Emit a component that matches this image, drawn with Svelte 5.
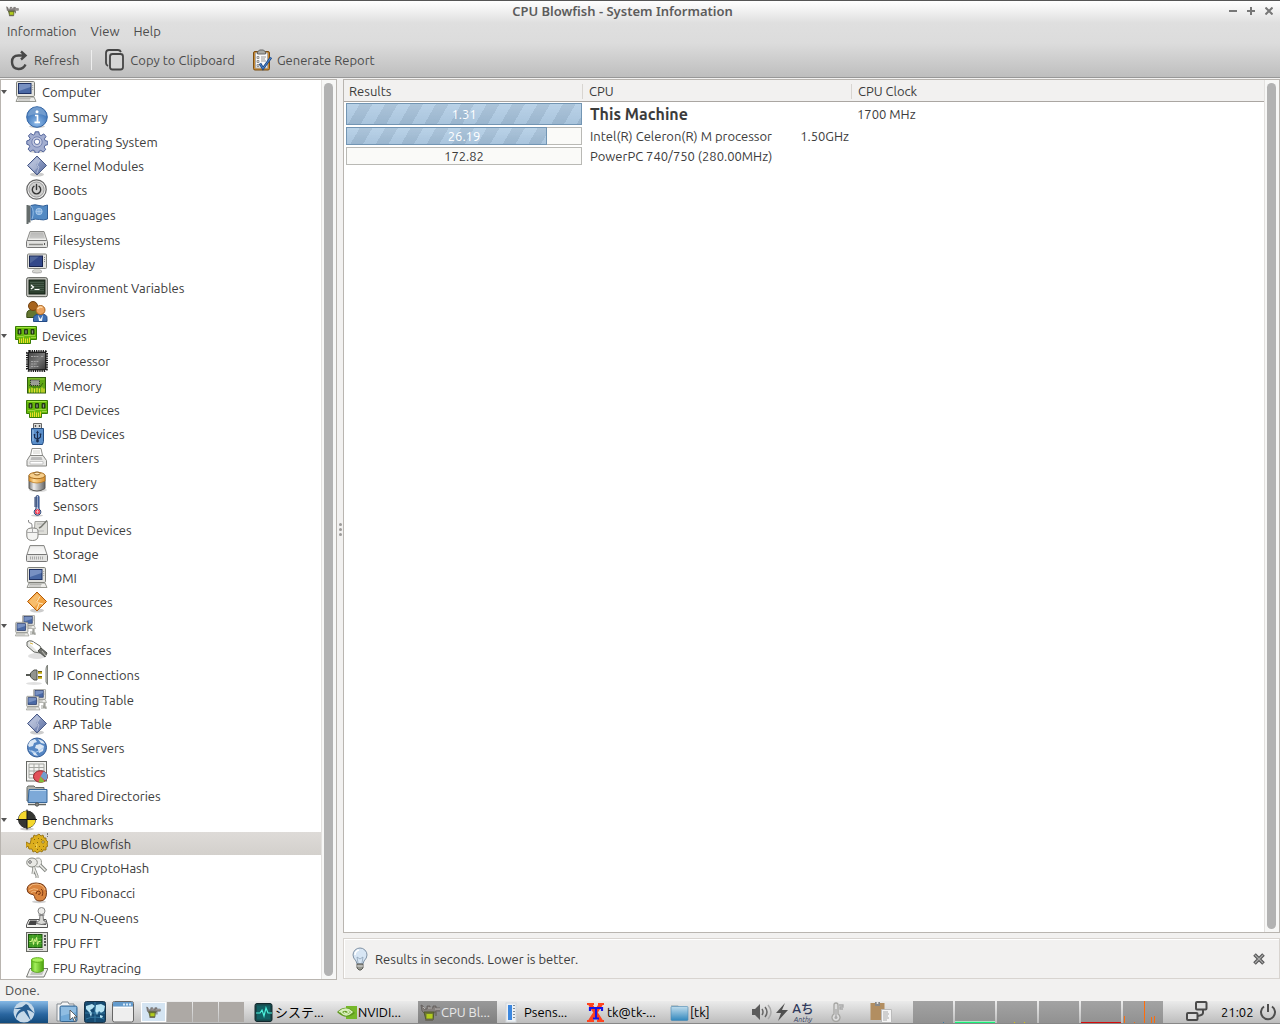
<script lang="ts">
	type Item = { label: string; icon: string; size?: string };
	type Group = { label: string; icon: string; items: Item[] };

	const monitor = (x: number, y: number, s: number) => `
		<g transform="translate(${x} ${y}) scale(${s})">
			<path d="M2.500 16h16l2 4.500H.5z" fill="#ecece9" stroke="#8b8c86" stroke-width=".9"/>
			<path d="M3 17.500h12M2.500 19h12" stroke="#a9aaa5" stroke-width=".8"/>
			<rect x="1" y=".5" width="18" height="15" rx="1.200" fill="#e3e3df" stroke="#7f807a"/>
			<rect x="3" y="2.500" width="12.500" height="10" fill="#4a69a5" stroke="#1f3265"/>
			<path d="M3.500 3h11.500v3L3.500 10z" fill="#8ba3cf" opacity=".7"/>
			<path d="M17.200 4v6" stroke="#a5a6a0" stroke-dasharray="1 1"/>
		</g>`;

	const diamond = `
		<ellipse cx="11" cy="19.500" rx="7" ry="2" fill="#000" opacity=".2"/>
		<path d="M11 1l9.500 9.500L11 20l-9.500-9.500z" fill="url(#blueSteel)" stroke="#4a5a86"/>
		<path d="M11 2.500l3 3-4 4 2 3-4 3.500-5-5.500z" fill="#fff" opacity=".28"/>
		<path d="M14 5l-3 5 2 2-2 6" fill="none" stroke="#d5dced" stroke-width=".7" opacity=".8"/>`;

	const card = `
		<path d="M.5 1.500h21v13h-6v4h-12v-4h-3z" fill="#65b80b" stroke="#397d05"/>
		<path d="M1.500 2.500h19" stroke="#a2e53c"/>
		<path d="M3 4.500h3v4.500H3zM9.500 4.500h3v4.500h-3zM16 4.500h3v4.500h-3z" fill="#3d5030" stroke="#16260b" stroke-width=".8"/>
		<path d="M4.500 5.500v3M11 5.500v3M17.500 5.500v3" stroke="#8d9a82"/>
		<path d="M4.500 13.500v4.500M6.500 13.500v4.500M8.500 12.500v5.500M10.500 13.500v4.500M12.500 13.500v4.500M14.500 12.500v5" stroke="#f0dc28"/>
		<path d="M2 11.500h6l2-1h10M16 12.500h5" fill="none" stroke="#b4e05a" stroke-width=".7"/>`;

	const robot = `
		<path d="M1 3l2 1 1 3h3V4h3v2h3V4h3v2h5v3h-5l-2 2H4L2 9z" fill="#85807e" stroke="#5f5b59" stroke-width=".8"/>
		<path d="M3 5l2 2M8 6h4M15 7h6" stroke="#b9b5b2"/>
		<path d="M4 10h10l-1 8H6z" fill="#6f7a35" stroke="#51582d"/>
		<path d="M6.500 12h6v4.500h-6z" fill="#b2cc1e"/>
		<path d="M14 10h2v4M5 18h8" fill="none" stroke="#6b675f" stroke-width="1.500"/>`;

	const disk = `
		<path d="M4 2.500h14l3 9H1z" fill="url(#silver)" stroke="#8b8b88"/>
		<rect x=".5" y="11.500" width="21" height="7" rx="1" fill="#e2e2e0" stroke="#777"/>`;

	const icons: Record<string, string> = {
		computer: monitor(0.5, 0, 1),
		info: `
			<ellipse cx="11" cy="20.500" rx="8" ry="1.500" fill="#000" opacity=".2"/>
			<circle cx="11" cy="11" r="10.300" fill="url(#blueBall)" stroke="#3566a5"/>
			<path d="M2 10a9 9 0 0 1 18 0q-8-4-18 0z" fill="#fff" opacity=".22"/>
			<circle cx="11" cy="5.700" r="1.500" fill="#fff"/>
			<path d="M9 9.500h2.500v7M8.500 16.300h5.500" stroke="#fff" stroke-width="1.700" fill="none"/>`,
		gear: `
			<ellipse cx="11" cy="20.500" rx="8" ry="1.300" fill="#000" opacity=".18"/>
			<path d="M9.200.8h3.600l.6 3 1.700.8 2.700-1.700 2.200 2.600-1.600 2.400.8 1.700 2.600.7v3.300l-2.800.8-.8 1.700 1.500 2.500-2.500 2.300-2.400-1.600-1.600.7-.7 2.200H9.300l-.7-2.400-1.700-.8-2.600 1.500-2.200-2.400 1.600-2.400-.8-1.800-2.100-.7v-3.300l2.500-.8.8-1.700-1.700-2.500 2.300-2.500 2.500 1.600 1.400-.7z" fill="#a3aed0" stroke="#51639a"/>
			<circle cx="11" cy="11" r="5.200" fill="#c4cae0" stroke="#7483b4"/>
			<circle cx="11" cy="10.800" r="2.700" fill="#fff" stroke="#6273a7"/>`,
		diamond,
		power: `
			<circle cx="10.500" cy="10.500" r="9.700" fill="#efefee" stroke="#666" stroke-width="1.200"/>
			<circle cx="10.500" cy="10.500" r="7.600" fill="#cfcfce" stroke="#999"/>
			<path d="M8 7.300a4.200 4.200 0 1 0 5 0M10.500 5.500v5" fill="none" stroke="#333" stroke-width="1.400" stroke-linecap="round"/>`,
		flag: `
			<path d="M1.500 1v19M3.500 1.500v17" stroke="#656c6b" stroke-width="2"/>
			<path d="M5 1.500q4-1.500 8 0t8.500-.5v14q-4 1.500-8 .5t-8.500.5z" fill="#5289c3" stroke="#315f98"/>
			<path d="M5 2q4 5 1 13" stroke="#90b8e2" fill="none"/>
			<circle cx="13" cy="7.500" r="3.200" fill="#7baadd" stroke="#b4d0ed" stroke-width=".8"/>
			<path d="M10 7.500h6M13 4.500v6" stroke="#b4d0ed" stroke-width=".6"/>`,
		drive: `${disk}<path d="M5 3.500h12l2 6H3z" fill="#888" opacity=".35"/><path d="M3 15.500h14" stroke="#8b8b88" stroke-width="1.500"/><path d="M18.500 14v2" stroke="#555"/>`,
		display: `
			<ellipse cx="11" cy="18.500" rx="5" ry="1.500" fill="#d9d9d5" stroke="#aaa"/>
			<path d="M8 15.500h6v3H8z" fill="#d4d5d0"/>
			<rect x="1.500" y="1" width="19" height="14.500" rx="1" fill="#e3e3df" stroke="#858681"/>
			<rect x="3.500" y="3" width="13" height="10.500" fill="#34498a" stroke="#17234f"/>
			<path d="M4 3.500h9L4 10.500z" fill="#6278a5" opacity=".6"/><path d="M18.500 4v6" stroke="#888" stroke-dasharray="1 1"/>`,
		terminal: `
			<rect x=".7" y=".7" width="20.600" height="19" rx="1.500" fill="#d0d1cb" stroke="#535650"/>
			<rect x="3" y="3" width="16" height="14" fill="#2d402f" stroke="#111c12"/>
			<path d="M4 5.500h14M4 7.500h14M4 9.500h14M4 11.500h14M4 13.500h14" stroke="#56695a" stroke-width=".6"/>
			<path d="M5 8l2.500 2L5 12M8.500 12.500h5" fill="none" stroke="#fff" stroke-width="1.200"/>`,
		users: `
			<path d="M.8 16.500V13q0-4.500 6-4.500 5 0 6 4.500v3.500z" fill="#637631" stroke="#394b14"/>
			<circle cx="7" cy="5" r="4.500" fill="#a8651e" stroke="#704110"/>
			<path d="M7.500 20.500v-3q0-4.500 7-4.500t6.500 4.500v3z" fill="#3d6eb2" stroke="#234a85"/>
			<path d="M12 14l2.500 4 2.500-4-1 6h-3z" fill="#f2f5fa"/>
			<circle cx="14.500" cy="9" r="4.500" fill="#eaa25d" stroke="#ad651b"/>
			<path d="M11.500 8q2-3 5-1.500" stroke="#ffd8a6" fill="none" stroke-width="1.500"/>`,
		card,
		cpu: `
			<rect x="1.500" y="1.500" width="19" height="19" rx="2" fill="#555" stroke="#171717" stroke-width="3" stroke-dasharray="1.200 1"/>
			<rect x="2.500" y="2.500" width="17" height="17" fill="url(#darkChip)" stroke="#222"/>
			<path d="M5 6.500h8M15 6.500h3M5 11.500h8M5 14h6M5 16.500h8" stroke="#a4a4a4" stroke-width="1.100" stroke-dasharray="2 .7"/>`,
		memory: `
			<rect x="1.500" y="2.500" width="18" height="15.500" fill="#60a914" stroke="#315d0c"/>
			<path d="M2.500 4h16" stroke="#97cf45"/>
			<rect x="4.500" y="5" width="9" height="5.500" fill="#9b9d96" stroke="#333" stroke-dasharray="1 1"/>
			<path d="M3.500 13.500v4M6 12.500v5M8.500 13.500v4M11 12.500v5M13.500 13.500v4M16 12.500v5M18 13.500v4" stroke="#eee334" stroke-width="1.200"/>
			<path d="M3 10l3 2h8l3-4" fill="none" stroke="#29540a" stroke-width=".8"/>`,
		usb: `
			<path d="M7.500.5h8v6h-8z" fill="#dededb" stroke="#666"/>
			<path d="M9.500 2v2M13.500 2v2" stroke="#555" stroke-width="1.300"/>
			<path d="M5.500 5.500h12v13l-1 3h-10l-1-3z" fill="#5b8fca" stroke="#244d82"/>
			<path d="M7 7v11" stroke="#a5c6e8"/>
			<path d="M11.500 18.500v-9M8.500 12v2.500l3 2 3-2.500v-2.500" fill="none" stroke="#1c2e50" stroke-width="1.100"/>
			<path d="M10 10l1.500-2.500L13 10zM7.700 11h1.600v1.600H7.700zM13.700 10.500h1.600v1.600h-1.600z" fill="#1c2e50"/>
			<circle cx="11.500" cy="18" r="1.400" fill="#1c2e50"/>`,
		printer: `
			<path d="M6 1.500h9l2 9H4z" fill="#fff" stroke="#93938f"/>
			<path d="M7 4h7M7 6h7" stroke="#d0d0cc"/>
			<path d="M4 8.500h13l3.500 5v5.500H1v-5.500z" fill="#e9e9e7" stroke="#868683"/>
			<path d="M5.500 10h10l1 3h-12z" fill="#bbb"/>
			<path d="M4 14.500h13v2.500H4z" fill="#fff" stroke="#aaa" stroke-width=".6"/>`,
		battery: `
			<ellipse cx="12" cy="19" rx="9" ry="2" fill="#000" opacity=".15"/>
			<path d="M3 4.500v13q8 5 16 0v-13z" fill="url(#metal)" stroke="#5b5b58"/>
			<path d="M3 4.500v5.500q8 4 16 0V4.500z" fill="url(#gold)" stroke="#b87416" stroke-width=".7"/>
			<ellipse cx="11" cy="4.500" rx="8" ry="3.200" fill="#f7cf8b" stroke="#a96c1b"/>
			<ellipse cx="11" cy="2.500" rx="3" ry="1.500" fill="#ffe8bc" stroke="#8d5d1b"/>`,
		sensor: `
			<ellipse cx="11" cy="20.500" rx="6" ry="1.200" fill="#000" opacity=".2"/>
			<path d="M10 2q0-1.500 1.500-1.500T13 2v12a3.300 3.300 0 1 1-3 0z" fill="#b9c9e2" stroke="#263e71"/>
			<path d="M8 3h3.500M8 5h3.500M8 7h3.500M8 9h3.500M8 11h3.500" stroke="#1f3769"/>
			<path d="M12.500 1v12" stroke="#415f9c"/><circle cx="11.500" cy="16.800" r="2.500" fill="#ef3047"/><path d="M11.500 15v3.500M9.800 16.800h3.400" stroke="#ffb0b8"/>`,
		input: `
			<path d="M9 2.500h12.500v13H8z" fill="#deded9" stroke="#a2a29e"/>
			<path d="M11 5h6M11 12h7" stroke="#bbb"/>
			<path d="M13 9l2-1 6-6.500" fill="none" stroke="#777973" stroke-width="1.500"/>
			<path d="M6 10V6q0-2-2-2T2.500 1" fill="none" stroke="#888"/>
			<path d="M.8 12q0-3 5.700-3t5.500 3v5q0 4.500-5.500 4.500T.8 17z" fill="#f4f4f2" stroke="#858581"/>
			<path d="M1 13.500h11M6.500 9v4.500" stroke="#aaa"/>`,
		storage: `${disk}<path d="M4.500 3.500h13l2.500 7.500H2z" fill="#fff" opacity=".6"/><path d="M4 15h13" stroke="#aaa" stroke-width="3" stroke-dasharray="1 1"/>`,
		resource: `
			<ellipse cx="11" cy="19.500" rx="7" ry="2" fill="#000" opacity=".2"/>
			<path d="M11 1l9.500 9.500L11 20l-9.500-9.500z" fill="#f2a443" stroke="#b45c08"/>
			<path d="M11 2.500l3 3-4 4 2 3-4 4-5-6z" fill="#ffe4aa" opacity=".4"/>
			<path d="M14 5.500l-3 5 2 2-2 6M13 12l4 1" fill="none" stroke="#fff0cd" stroke-width=".9"/>`,
		network: `${monitor(7, 0, 0.66)}${monitor(0, 7, 0.68)}<path d="M18 14v3h-3M19 14v5h-4M17 18h3v2" fill="none" stroke="#a0a19b" stroke-width="1.200"/>`,
		plug: `
			<ellipse cx="11" cy="17" rx="9" ry="3" fill="#000" opacity=".12"/>
			<path d="M1 3q2-2 5-1l8 5 2 4-2 3-6-1-7-6z" fill="#e4e5e1" stroke="#656762"/>
			<path d="M3 4l4-1 7 5-3 4z" fill="#fff"/>
			<path d="M12 12l3-3 6 5-2 4z" fill="#70726d" stroke="#4d4f4b"/><path d="M16 12l4 5" stroke="#c1c1bb"/><path d="M4 4l3 1" stroke="#d3b344"/>`,
		connection: `
			<ellipse cx="8" cy="19.500" rx="8" ry="1.500" fill="#000" opacity=".12"/>
			<path d="M-1 11h7" stroke="#555853" stroke-width="2"/>
			<path d="M4.500 9l3.500-3h3v10H8l-3.500-3z" fill="#92948e" stroke="#50534d"/>
			<path d="M12 8.500h4M12 13.500h4" stroke="#c3a90e" stroke-width="2.500"/><path d="M12 7.500h4M12 12.500h4" stroke="#6a5b12"/>
			<path d="M21.500 1q-1.500 2-1.500 4v13l1.500 2.500z" fill="#d4d5d1" stroke="#7e817b"/>`,
		globe: `
			<circle cx="11" cy="10.500" r="9.500" fill="#5687c4" stroke="#315b97"/>
			<path d="M4 4l5-2 2 3-3 1-1 3-4 1-1-2zM10 8l4-1 4 2-1 5-4 2-1-4-3-1zM12 2l5 2 2 3-4-1zM5 13l4 2 3 4-4-1z" fill="#eef5fc" opacity=".88"/>
			<path d="M3 13q6 6 15-3" fill="none" stroke="#a9caef"/>`,
		stats: `
			<rect x=".5" y=".5" width="20" height="19.500" fill="#f2f2f0" stroke="#666864"/>
			<path d="M3 3h15v14H3zM3 6.500h15M3 10h15M3 13.500h15M8 3v14M13 3v14" fill="none" stroke="#a5a7a2"/>
			<ellipse cx="14.500" cy="15.500" rx="7" ry="5.800" fill="#e25059" stroke="#8c2027"/>
			<path d="M14.500 15.500l3-5q4 1 4 5 0 2-2 4z" fill="#729fcf"/><path d="M14.500 15.500l4 5q-3 1.500-6 .5z" fill="#83bd39"/>`,
		folder: `
			<path d="M1 2.500L2 1h6l1.500 1.500H18V16H1z" fill="#b0b2ad" stroke="#666964"/>
			<path d="M3 4.500h18v13H2z" fill="#7da9d8" stroke="#386798"/>
			<path d="M4 5.500h16" stroke="#bcd7f0"/><path d="M2 19.500h18M11 18v3" stroke="#62645f" stroke-width="1.300"/><circle cx="11" cy="19.500" r="1.700" fill="#888a84" stroke="#555"/>`,
		benchmark: `
			<ellipse cx="12" cy="20" rx="7" ry="1.500" fill="#000" opacity=".2"/>
			<circle cx="12" cy="10.500" r="8.500" fill="#353632" stroke="#333"/>
			<path d="M12 10.500H3.500A8.500 8.500 0 0 1 12 2zM12 10.500h8.500a8.500 8.500 0 0 1-8.500 8.500z" fill="#f4d72d"/>
			<path d="M1.500 10.500h21M12 .5v20" stroke="#111"/>`,
		fish: `
			<path d="M0 9l4 2 1-4 0-2 2 0 1-3 2 1 3-2 2 2 2-1 1 3 2 0 0 2 2 2-1 2 1 2-2 1 0 3-3 0-1 2-2-1-3 2-2-2-2 1-1-3-3 0-1-3-4 3 2-4z" fill="#dcae1d" stroke="#94700f" stroke-width=".9"/>
			<path d="M8 6l1 1M12 5l1 1M7 10l1 1M11 9l1 1M9 13l1 1M13 13l1 1M11 16l1 1M15 16l1 1M17 13l1 1M15 6l1 1" stroke="#8a690d"/>
			<circle cx="17" cy="9" r="1.200" fill="#fff5b0" stroke="#66500f" stroke-width=".7"/><path d="M10 11q2 2 0 4" stroke="#f6da60" fill="none"/><path d="M21.500 0v2M21.500 3v1" stroke="#777"/>`,
		keys: `
			<path d="M7 9l4 10v2M8 10l-1 7" stroke="#858883" stroke-width="3"/>
			<path d="M7 9l4 10v2M8 10l-1 7" stroke="#e6e6e2" stroke-width="1.500"/>
			<ellipse cx="12" cy="5.500" rx="3.500" ry="4.500" fill="#ededea" stroke="#999b96"/>
			<ellipse cx="6" cy="5.500" rx="5.300" ry="4.500" fill="#e8e8e4" stroke="#888a84"/>
			<path d="M14 8l6 6" fill="none" stroke="#858883" stroke-width="3.500"/><path d="M14 8l5.500 5.500" stroke="#ededea" stroke-width="1.500"/><circle cx="4" cy="5" r="1.300" fill="#fff" stroke="#666"/>`,
		shell: `
			<ellipse cx="13" cy="19.800" rx="7" ry="1.500" fill="#000" opacity=".18"/>
			<path d="M1 7Q2 1 10 1q10.500 0 10.500 9.500Q20.500 19 14 19q-5 0-5.500-4.500Q8 12 4.500 12 1 11 1 7z" fill="#d9843e" stroke="#733612"/>
			<path d="M16 14q2-5-1-7M10 12q0-3 3-3 2 1 1 3-1 1-2 0" fill="none" stroke="#7d3710"/>
			<path d="M3 5.500q3-4 8-3.500 6 .5 8 6" fill="none" stroke="#f2ba80"/>
			<path d="M3 8.500q5-3 9-1M5 10.500q3-2 5-1" fill="none" stroke="#f2ba80"/>`,
		pawn: `
			<path d="M3 12.500h17l1.500 5.500v2.500h-21V18z" fill="#f3f3f1" stroke="#555"/>
			<path d="M4 13.500h7l-1 4.500H2zM15 13.500h4l1 4.500h-5z" fill="#444"/>
			<path d="M14 8h3l.5 5.500q3 1 3 3-5 2-10 0 0-2 3-3z" fill="#d9d9d6" stroke="#777"/>
			<circle cx="15.500" cy="4" r="3.500" fill="#ececea" stroke="#888"/><path d="M12.500 8h6" stroke="#777"/>`,
		scope: `
			<rect x=".5" y=".5" width="21" height="19" fill="#deded9" stroke="#666862"/>
			<rect x="2.500" y="2.500" width="13.500" height="13" fill="#3f9c20" stroke="#1e5211"/>
			<path d="M3 6.500h13M3 11.500h13M7 2.500v13M11.500 2.500v13" stroke="#69b64d" stroke-width=".5"/>
			<path d="M3.500 9.500h2l1-3 1 6 1-5 1 2 1-4 1 7 1-3h2" fill="none" stroke="#d9f88a"/><path d="M19 3v12" stroke="#555" stroke-width="2" stroke-dasharray="2 1"/><path d="M3 17.500h14" stroke="#888"/>`,
		cylinder: `
			<path d="M4 11.500h18l-4 8.500H.5z" fill="#f1f1ef" stroke="#777974"/>
			<path d="M6 14h12l-2 4H4z" fill="#c3c5c0"/>
			<path d="M5.500 3v10.500q6 4 12 0V3z" fill="url(#green)" stroke="#4a990c" stroke-width=".7"/>
			<ellipse cx="11.500" cy="3" rx="6" ry="2.300" fill="#aaf05c" stroke="#5aad16"/>`
	};

	const groups: Group[] = [
		{
			label: 'Computer',
			icon: 'computer',
			items: [
				{ label: 'Summary', icon: 'info', size: 'tall' },
				{ label: 'Operating System', icon: 'gear', size: 'tall' },
				{ label: 'Kernel Modules', icon: 'diamond' },
				{ label: 'Boots', icon: 'power' },
				{ label: 'Languages', icon: 'flag', size: 'tall' },
				{ label: 'Filesystems', icon: 'drive', size: 'tall' },
				{ label: 'Display', icon: 'display' },
				{ label: 'Environment Variables', icon: 'terminal' },
				{ label: 'Users', icon: 'users' }
			]
		},
		{
			label: 'Devices',
			icon: 'card',
			items: [
				{ label: 'Processor', icon: 'cpu', size: 'tall' },
				{ label: 'Memory', icon: 'memory', size: 'tall' },
				{ label: 'PCI Devices', icon: 'card' },
				{ label: 'USB Devices', icon: 'usb' },
				{ label: 'Printers', icon: 'printer' },
				{ label: 'Battery', icon: 'battery' },
				{ label: 'Sensors', icon: 'sensor' },
				{ label: 'Input Devices', icon: 'input' },
				{ label: 'Storage', icon: 'storage' },
				{ label: 'DMI', icon: 'computer' },
				{ label: 'Resources', icon: 'resource' }
			]
		},
		{
			label: 'Network',
			icon: 'network',
			items: [
				{ label: 'Interfaces', icon: 'plug' },
				{ label: 'IP Connections', icon: 'connection', size: 'tall' },
				{ label: 'Routing Table', icon: 'network', size: 'tall' },
				{ label: 'ARP Table', icon: 'diamond' },
				{ label: 'DNS Servers', icon: 'globe' },
				{ label: 'Statistics', icon: 'stats' },
				{ label: 'Shared Directories', icon: 'folder' }
			]
		},
		{
			label: 'Benchmarks',
			icon: 'benchmark',
			items: [
				{ label: 'CPU Blowfish', icon: 'fish', size: 'short' },
				{ label: 'CPU CryptoHash', icon: 'keys', size: 'tall' },
				{ label: 'CPU Fibonacci', icon: 'shell', size: 'tall' },
				{ label: 'CPU N-Queens', icon: 'pawn', size: 'tall' },
				{ label: 'FPU FFT', icon: 'scope', size: 'tall' },
				{ label: 'FPU Raytracing', icon: 'cylinder', size: 'tall' }
			]
		}
	];

	const results = [
		{ value: '1.31', percent: 100, cpu: 'This Machine', extra: '', clock: '1700 MHz' },
		{ value: '26.19', percent: 85, cpu: 'Intel(R) Celeron(R) M processor', extra: '1.50GHz', clock: '' },
		{ value: '172.82', percent: 0, cpu: 'PowerPC 740/750 (280.00MHz)', extra: '', clock: '' }
	];

	const taskIcons: Record<string, string> = {
		monitor: `<rect x="1" y="1.500" width="17" height="18" rx="2" fill="#17494c" stroke="#12282d"/><rect x="3" y="3.500" width="13" height="14" fill="#126063"/><path d="M2 11h4l2-3 2 6 2-8 2 5h4" fill="none" stroke="#4df1dc" stroke-width="1.200"/>`,
		nvidia: `<path d="M9 4h11v13H9z" fill="#76b82a"/><path d="M0 10q9-9 18 1-9 8-18-1z" fill="#5d981c"/><path d="M2 10q7-6 13 0-6 6-11 0 4-4 8 0-3 3-5 0" fill="none" stroke="#d9efbd" stroke-width="1.500"/>`,
		robot,
		psensor: `<rect x="3" y="1" width="10" height="19" fill="#edf1f5" stroke="#d1d6da"/><path d="M7 3v15" stroke="#3b87df" stroke-width="4"/><path d="M11 3v15" stroke="#7b8b98" stroke-width="2" stroke-dasharray="1 2"/>`,
		xterm: `<path d="M4 2l11 17M15 2L4 19" stroke="#ff431f" stroke-width="4"/><path d="M1 2h7M12 2h6M1 19h7M11 19h7" stroke="#ff431f" stroke-width="2"/><path d="M4 9V6h12v3M10 6v11M7 16.500h6" fill="none" stroke="#1413e8" stroke-width="2.200"/>`,
		files: `<path d="M2 3h7l1 2h8v4H2z" fill="#bbc3c5"/><rect x="2" y="4.500" width="17" height="14" rx="1" fill="url(#blueFolder)" stroke="#4787b1" stroke-width=".6"/>`
	};

	const tasks = [
		{ label: 'システ...', icon: 'monitor' },
		{ label: 'NVIDI...', icon: 'nvidia' },
		{ label: 'CPU Bl...', icon: 'robot' },
		{ label: 'Psens...', icon: 'psensor' },
		{ label: 'tk@tk-...', icon: 'xterm' },
		{ label: '[tk]', icon: 'files' }
	];

	const graphs = [
		'<path d="M30 21h1v1h-1z" fill="#397fae"/>',
		'<path d="M0 21h40v1H0z" fill="#16f078"/><path d="M0 20h40v1H0z" fill="#a4e8c0"/>',
		'<path d="M17 21h1v1h-1zM27 21h1v1h-1z" fill="#e4ca00"/>',
		'',
		'<path d="M0 21h40v1H0z" fill="#d40b0b"/>',
		'<path d="M1 15h1v7H1zM11 21h1v1h-1zM21 0h1v22h-1zM28 16h1v6h-1zM31 15h1v7h-1z" fill="#ff6d0a"/>'
	];

	let selected = 'CPU Blowfish';
	let workspace = 0;
	let showNote = true;
</script>

<svg class="defs" aria-hidden="true">
	<defs>
		<linearGradient id="blueSteel" x2="1" y2="1"><stop stop-color="#b3bfdd" /><stop offset="1" stop-color="#5a6d9f" /></linearGradient>
		<radialGradient id="blueBall" cy=".8"><stop stop-color="#8fbbea" /><stop offset="1" stop-color="#4b80c0" /></radialGradient>
		<linearGradient id="silver" x2="0" y2="1"><stop stop-color="#d0d0ce" /><stop offset="1" stop-color="#f4f4f2" /></linearGradient>
		<linearGradient id="darkChip" x2="1" y2="1"><stop stop-color="#454545" /><stop offset=".5" stop-color="#777" /><stop offset="1" stop-color="#3b3b3b" /></linearGradient>
		<linearGradient id="metal"><stop stop-color="#777" /><stop offset=".3" stop-color="#eee" /><stop offset="1" stop-color="#666" /></linearGradient>
		<linearGradient id="gold"><stop stop-color="#d88f2c" /><stop offset=".3" stop-color="#ffdc9a" /><stop offset="1" stop-color="#d88f2c" /></linearGradient>
		<linearGradient id="green"><stop stop-color="#5bb51a" /><stop offset=".3" stop-color="#a4ef5b" /><stop offset="1" stop-color="#4aa00c" /></linearGradient>
		<linearGradient id="blueFolder" x2="0" y2="1"><stop stop-color="#c0dded" /><stop offset="1" stop-color="#3187bd" /></linearGradient>
	</defs>
</svg>

<div class="desktop">
	<header>
		<div class="titlebar">
			<svg class="appicon" viewBox="0 0 22 22">{@html robot}</svg>
			<h1>CPU Blowfish - System Information</h1>
			<div class="controls">
				<button aria-label="Minimize"><svg viewBox="0 0 8 8"><path d="M0 4h8" /></svg></button>
				<button aria-label="Maximize"><svg viewBox="0 0 8 8"><path d="M0 4h8M4 0v8" /></svg></button>
				<button aria-label="Close"><svg viewBox="0 0 8 8"><path d="M.5.5l7 7M7.500.5l-7 7" /></svg></button>
			</div>
		</div>
		<nav class="menubar">
			<button>Information</button>
			<button>View</button>
			<button>Help</button>
		</nav>
		<div class="toolbar">
			<button>
				<svg viewBox="0 0 22 22"><path d="M17.500 15.500q-2 4.500-7 4.500-6.500-.5-6.500-7T10.500 6.500h7M13 2.500l4.500 4-4.500 4" fill="none" stroke="#484848" stroke-width="2.400" /></svg>
				Refresh
			</button>
			<span class="separator"></span>
			<button>
				<svg viewBox="0 0 22 22"><path d="M4 17q-2-1-2-3V4q0-3 3-3h9q2 0 3 2" fill="none" stroke="#454545" stroke-width="1.800" /><rect x="6" y="5" width="13" height="15.500" rx="2.500" fill="#d5d5d5" stroke="#454545" stroke-width="1.800" /></svg>
				Copy to Clipboard
			</button>
			<button>
				<svg viewBox="0 0 22 22">
					<rect x="2.500" y="2.500" width="16" height="18.500" rx="1.500" fill="#c88b36" stroke="#7b4e12" />
					<path d="M4.500 4h12v15h-12z" fill="#fafafa" stroke="#aaa" />
					<path d="M6.500 3l2-2h4l2 2v2h-8z" fill="#a9aaa5" stroke="#666" />
					<path d="M6 7.500h2v2H6zM6 11.500h2v2H6zM6 15.500h2v2H6z" fill="#ddd" stroke="#777" stroke-width=".7" />
					<path d="M10 8h5M10 10h4M10 12h5" stroke="#999" />
					<path d="M9 14.500l3 5 8-11" fill="none" stroke="#1e4a88" stroke-width="2.600" /><path d="M9 14.500l3 5 8-11" fill="none" stroke="#4f87cc" />
				</svg>
				Generate Report
			</button>
		</div>
	</header>

	<main>
		<aside class="frame">
			<nav class="tree">
				{#each groups as group}
					<button class="row group">
						<span class="expander"></span>
						<svg viewBox="0 0 22 22">{@html icons[group.icon]}</svg>
						{group.label}
					</button>
					{#each group.items as item}
						<button class="row {item.size ?? ''}" class:selected={selected === item.label} on:click={() => (selected = item.label)}>
							<svg viewBox="0 0 22 22">{@html icons[item.icon]}</svg>
							{item.label}
						</button>
					{/each}
				{/each}
			</nav>
			<div class="scrollbar"><div class="thumb"></div></div>
		</aside>

		<div class="splitter"><i></i><i></i><i></i></div>

		<section>
			<div class="frame report">
				<div class="tablebox">
					<table>
						<colgroup><col class="c1" /><col class="c2" /><col /></colgroup>
						<thead>
							<tr><th>Results</th><th>CPU</th><th>CPU Clock</th></tr>
						</thead>
						<tbody>
							{#each results as result, i}
								<tr class:mine={i === 0}>
									<td class="result">
										<div class="bar" class:filled={result.percent > 0}>
											<div class="fill" style="width: {result.percent}%"></div>
											<span>{result.value}</span>
										</div>
									</td>
									<td class="name"><div class="cpu"><span>{result.cpu}</span><span>{result.extra}</span></div></td>
									<td class="clock">{result.clock}</td>
								</tr>
							{/each}
						</tbody>
					</table>
				</div>
				<div class="scrollbar"><div class="thumb"></div></div>
			</div>

			{#if showNote}
				<div class="note">
					<svg viewBox="0 0 22 24">
						<path d="M11 1a7 7 0 0 1 7 7q0 3-3 6l-1 3H8l-1-3q-3-3-3-6a7 7 0 0 1 7-7z" fill="#d8e6f4" stroke="#7f91a4" />
						<path d="M6 8q0-4 4-5" fill="none" stroke="#fff" stroke-width="1.500" /><path d="M9 16l-1-6 3 2 3-2-1 6" fill="none" stroke="#8fa3b8" stroke-width=".8" />
						<path d="M8 17h6v4l-2 2h-2l-2-2z" fill="#96978f" stroke="#5c5d58" /><path d="M8 19h6" stroke="#ddd" />
					</svg>
					<p>Results in seconds. Lower is better.</p>
					<button aria-label="Close note" on:click={() => (showNote = false)}>
						<svg viewBox="0 0 14 14"><path d="M2.500 2.500l9 9M11.500 2.500l-9 9" stroke="#555" stroke-width="3.600" /><path d="M3 3l8 8M11 3l-8 8" stroke="#aaa" stroke-width="1.200" /></svg>
					</button>
				</div>
			{/if}
		</section>
	</main>

	<div class="status">Done.</div>

	<footer>
		<button class="start" aria-label="Applications">
			<svg viewBox="0 0 22 22"><circle cx="11" cy="11" r="10.500" fill="#c5d8e8" /><path d="M0 8l9-2 4-3q3 1 3 3l6 7q-5-4-8-4l4 11-7-10Q5 11 3 18q-1-6 5-10z" fill="#285d90" /></svg>
		</button>
		<div class="launchers">
			<button aria-label="File manager">
				<svg viewBox="0 0 22 22"><path d="M1 3h4l1-2h6l1 2h5v17H1z" fill="#f4f5f6" stroke="#858b90" /><rect x="4" y="5" width="17" height="15.500" rx="1.500" fill="#70a9d8" stroke="#36658f" /><path d="M5 6h15v5L5 15z" fill="#a5cbea" opacity=".6" /><path d="M14 9v10l2.500-2.500 2 4 1.500-1-2-3.500h3z" fill="#fff" stroke="#444" stroke-width=".8" /></svg>
			</button>
			<button aria-label="Web browser">
				<svg viewBox="0 0 22 22"><rect x=".5" y=".5" width="21" height="21" rx="2" fill="#164b72" stroke="#183348" /><path d="M2 5l6-2 3 2-3 3-2 1 2 3-1 4-2-5-3-3zM12 4l5-1 4 2-1 5-3 2-2-2-2 4-2-4zM16 14l3 1-1 2h-2z" fill="#b7e4f4" /><path d="M2 18q9-4 18 0M11 1v20M1 12h20" fill="none" stroke="#3f89b2" stroke-width=".7" /></svg>
			</button>
			<button aria-label="Show desktop">
				<svg viewBox="0 0 22 22"><rect x=".5" y=".5" width="21" height="20.500" rx="2" fill="#eee" stroke="#666" /><path d="M1 2q0-1 1-1h18q1 0 1 1v3.500H1z" fill="#649bcd" /><path d="M2 6.500h18" stroke="#fff" /><path d="M11 3.500h8" stroke="#d7e9f8" stroke-width="2" stroke-dasharray="2 1" /></svg>
			</button>
		</div>
		<div class="pager">
			{#each [0, 1, 2, 3] as n}
				<button class:current={workspace === n} aria-label="Workspace {n + 1}" on:click={() => (workspace = n)}>
					{#if workspace === n}<svg viewBox="0 0 22 22">{@html robot}</svg>{/if}
				</button>
			{/each}
		</div>
		<div class="tasks">
			{#each tasks as task, i}
				<button class:active={i === 2}>
					<svg viewBox="0 0 20 21">{@html taskIcons[task.icon]}</svg><span>{task.label}</span>
				</button>
			{/each}
		</div>
		<div class="tray">
			<svg class="volume" viewBox="0 0 22 20"><path d="M1 7h3l5-5v16l-5-5H1z" fill="#5c5c5c" /><path d="M11 7q2 3 0 6M14 5q4 5 0 10" fill="none" stroke="#666" stroke-width="1.500" /><path d="M17 3q6 7 0 14" fill="none" stroke="#aaa" stroke-width="1.500" /></svg>
			<svg class="bolt" viewBox="0 0 12 20"><path d="M9 1L0 11h5l-3 8 10-11H6z" fill="#505050" /></svg>
			<div class="anthy"><b>Aち</b><i>Anthy</i></div>
			<svg class="thermo" viewBox="0 0 14 20"><path d="M3 3q0-2 2-2t2 2v9a4 4 0 1 1-4 0z" fill="#ddd" stroke="#a5a5a2" stroke-width="1.300" /><circle cx="5" cy="15.500" r="1.500" fill="#aaa" /><path d="M5 7v8M8 3h4v2H9v2h3" fill="none" stroke="#aaa" stroke-width="1.300" /></svg>
			<svg class="clip" viewBox="0 0 22 22"><rect x=".5" y="2" width="14" height="17" fill="#b28e61" /><path d="M5 1h5v4H5z" fill="#888" /><circle cx="7.500" cy="2" r="1" fill="#eee" /><path d="M11.500 8.500h10v13h-10z" fill="#f4f4f4" stroke="#bbb" /><path d="M13 11h5M13 13h6M13 15h5M13 17h6M13 19h4" stroke="#aaa" /></svg>
		</div>
		<div class="graphs">
			{#each graphs as graph}
				<svg viewBox="0 0 40 22">{@html graph}</svg>
			{/each}
		</div>
		<svg class="net" viewBox="0 0 22 20"><g fill="#ddd" stroke="#4a4a4a" stroke-width="2"><rect x="10" y="1" width="10.500" height="7.500" rx="1" /><rect x="1" y="12" width="10.500" height="7" rx="1" /><path d="M17 8v4q0 2-5 3" fill="none" /></g></svg>
		<time>21:02</time>
		<button class="shutdown" aria-label="Shut down">
			<svg viewBox="0 0 18 18"><path d="M5 3.500a7 7 0 1 0 8 0M9 1v8" fill="none" stroke="#4e4e4e" stroke-width="2" /></svg>
		</button>
	</footer>
</div>

<style>
	:global(body) {
		margin: 0;
		background: #f2f1f0;
	}

	.defs {
		position: absolute;
		width: 0;
		height: 0;
	}

	.desktop {
		height: 100vh;
		display: flex;
		flex-direction: column;
		font: 13px/18px "Ubuntu", "Noto Sans", "Noto Sans CJK JP", sans-serif;
		color: #3c3c3c;
	}

	svg {
		display: block;
		flex: none;
	}

	button {
		display: flex;
		align-items: center;
		border: 0;
		padding: 0;
		margin: 0;
		background: none;
		font: inherit;
		color: inherit;
		white-space: nowrap;
	}

	header {
		box-sizing: border-box;
		height: 78px;
		margin-bottom: 1px;
		border-top: 1px solid #555;
		border-bottom: 1px solid #979797;
		background: linear-gradient(#fff, #dfdfdf 22px, #dcdcdc 42px, #bebebe);
		flex: none;
		color: #4c4c4c;
	}

	.titlebar {
		display: grid;
		grid-template-columns: 35px 1fr 70px;
		align-items: center;
		height: 20px;
	}

	.appicon {
		width: 13px;
		height: 13px;
		margin-left: 6px;
	}

	h1 {
		margin: 0;
		text-align: center;
		font-family: "Noto Sans", sans-serif;
		font-size: 13px;
		line-height: 16px;
		font-weight: 600;
		color: #5c5c5c;
	}

	.controls {
		display: flex;
		justify-content: flex-end;
		gap: 10px;
		padding-right: 7px;
	}

	.controls svg {
		width: 8px;
		height: 8px;
		fill: none;
		stroke: #777;
		stroke-width: 2;
	}

	.menubar {
		display: flex;
		gap: 14px;
		height: 20px;
		padding-left: 7px;
	}

	.toolbar {
		display: flex;
		align-items: center;
		height: 38px;
		padding-left: 8px;
	}

	.toolbar button {
		gap: 4px;
		margin-right: 16px;
	}

	.toolbar svg {
		width: 22px;
		height: 22px;
	}

	.separator {
		width: 1px;
		height: 20px;
		background: #eee;
		margin: 0 12px 0 -4px;
	}

	main {
		flex: 1;
		min-height: 0;
		display: flex;
	}

	.frame {
		box-sizing: border-box;
		display: flex;
		border: 1px solid #b9b5b0;
		background: #fff;
	}

	aside {
		width: 337px;
		flex: none;
	}

	.tree {
		flex: 1;
		overflow: hidden;
	}

	.row {
		width: 100%;
		height: 24px;
		gap: 5px;
		padding-left: 25px;
	}

	.row.tall {
		height: 25px;
	}

	.row.short {
		height: 23px;
	}

	.row.group {
		padding-left: 0;
	}

	.row svg {
		width: 22px;
		height: 22px;
	}

	.selected {
		background: linear-gradient(#dedbd8, #d3d0cc);
	}

	.expander {
		border: 3px solid transparent;
		border-top: 4px solid #555;
		border-bottom: 0;
		margin-right: 3px;
	}

	.scrollbar {
		box-sizing: border-box;
		width: 15px;
		flex: none;
		padding: 3px 3px 3px 2px;
		border-left: 1px solid #e3e1df;
		background: #f7f7f6;
	}

	.thumb {
		width: 9px;
		height: 100%;
		border-radius: 5px;
		background: #b2b2b2;
	}

	.splitter {
		display: flex;
		flex-direction: column;
		align-items: center;
		justify-content: center;
		gap: 2px;
		width: 6px;
		flex: none;
	}

	.splitter i {
		width: 3px;
		height: 3px;
		border-radius: 2px;
		background: #9c9a98;
	}

	section {
		flex: 1;
		min-width: 0;
		display: flex;
		flex-direction: column;
		gap: 5px;
	}

	.report {
		flex: 1;
		min-height: 0;
	}

	.tablebox {
		flex: 1;
		overflow: hidden;
	}

	table {
		width: 100%;
		border-collapse: collapse;
		table-layout: fixed;
	}

	.c1 {
		width: 239px;
	}

	.c2 {
		width: 269px;
	}

	th {
		box-sizing: border-box;
		height: 22px;
		padding: 0 6px;
		font-weight: normal;
		text-align: left;
		background: linear-gradient(#d8d5d1, #d8d5d1) right / 1px 15px no-repeat #f2f1f0;
		box-shadow: inset 0 -1px #aaa6a2;
	}

	th:first-child {
		padding-left: 5px;
	}

	th:last-child {
		background: #f2f1f0;
	}

	td {
		box-sizing: border-box;
		height: 20px;
		padding: 0 5px;
		line-height: 16px;
		white-space: nowrap;
	}

	.mine td {
		height: 24px;
	}

	td.result {
		padding: 1px 1px 1px 2px;
	}

	td.name {
		padding: 0 3px 0 7px;
	}

	.bar {
		box-sizing: border-box;
		display: grid;
		height: 18px;
		border: 1px solid #b9b9b5;
		background: #fafaf8;
		text-align: center;
		line-height: 16px;
	}

	.mine .bar {
		height: 22px;
		line-height: 20px;
	}

	.bar > * {
		grid-area: 1 / 1;
	}

	.filled {
		color: #fff;
	}

	.filled .fill {
		margin: -1px;
		border: 1px solid #7295b3;
		background: linear-gradient(#ffffff22, #00000008), repeating-linear-gradient(120deg, #afcbe4 0 11px, #9fbbd4 11px 22px);
	}

	.cpu {
		display: flex;
		justify-content: space-between;
	}

	.mine .cpu {
		font-size: 16px;
		font-weight: bold;
	}

	.note {
		box-sizing: border-box;
		display: flex;
		align-items: center;
		gap: 4px;
		height: 41px;
		margin-bottom: 1px;
		padding: 0 13px 0 5px;
		border: 1px solid #d8d4d0;
		box-shadow: inset 1px 1px #fff;
		flex: none;
	}

	.note > svg {
		width: 22px;
		height: 24px;
	}

	.note p {
		flex: 1;
		margin: 0;
	}

	.note button svg {
		width: 14px;
		height: 14px;
	}

	.status {
		height: 21px;
		line-height: 20px;
		padding-left: 5px;
		flex: none;
		color: #4c4c4c;
	}

	footer {
		box-sizing: border-box;
		display: flex;
		height: 23px;
		border-bottom: 1px solid #888;
		background: linear-gradient(#ebebeb, #bdbdbd);
		flex: none;
		color: #000;
	}

	.start {
		width: 48px;
		justify-content: center;
		background: linear-gradient(#85b8e5, #2a66a0 60%, #124a7c);
	}

	.start svg,
	.launchers svg {
		width: 22px;
		height: 22px;
	}

	.launchers {
		display: flex;
		gap: 6px;
		padding: 0 7px 0 8px;
	}

	.pager {
		display: flex;
		gap: 1px;
		padding-top: 1px;
	}

	.pager button {
		box-sizing: border-box;
		width: 25px;
		height: 20px;
		background: #ada9a5;
	}

	.pager .current {
		border: 1px solid #fff;
		background: #d4e4f2;
		justify-content: center;
	}

	.pager svg {
		width: 15px;
		height: 15px;
	}

	.tasks {
		flex: 1;
		display: flex;
		gap: 4px;
		padding-left: 8px;
	}

	.tasks button {
		box-sizing: border-box;
		width: 79px;
		padding-left: 2px;
		gap: 1px;
		overflow: hidden;
	}

	.tasks svg {
		width: 20px;
		height: 21px;
	}

	.tasks .active {
		background: linear-gradient(#999, #808080);
		color: #e8e8e8;
	}

	.tray {
		display: flex;
		align-items: center;
	}

	.volume {
		width: 22px;
		height: 20px;
		margin-right: 3px;
	}

	.bolt {
		width: 12px;
		height: 20px;
		margin-right: 3px;
	}

	.anthy {
		display: grid;
		justify-items: center;
		width: 24px;
		margin-right: 16px;
		color: #303a5c;
		font-size: 13px;
		line-height: 15px;
	}

	.anthy b {
		font-weight: 500;
	}

	.anthy i {
		font-size: 7px;
		line-height: 7px;
	}

	.thermo {
		width: 14px;
		height: 20px;
		margin-right: 25px;
	}

	.clip {
		width: 22px;
		height: 22px;
		margin-right: 21px;
	}

	.graphs {
		display: flex;
		gap: 2px;
		margin-right: 23px;
	}

	.graphs svg {
		width: 40px;
		height: 22px;
		background: linear-gradient(#a3a3a3, #919191);
	}

	.net {
		width: 22px;
		height: 20px;
		margin-right: 13px;
	}

	time {
		width: 32px;
		line-height: 22px;
		margin-right: 6px;
	}

	.shutdown {
		margin-right: 3px;
	}

	.shutdown svg {
		width: 18px;
		height: 18px;
	}
</style>
